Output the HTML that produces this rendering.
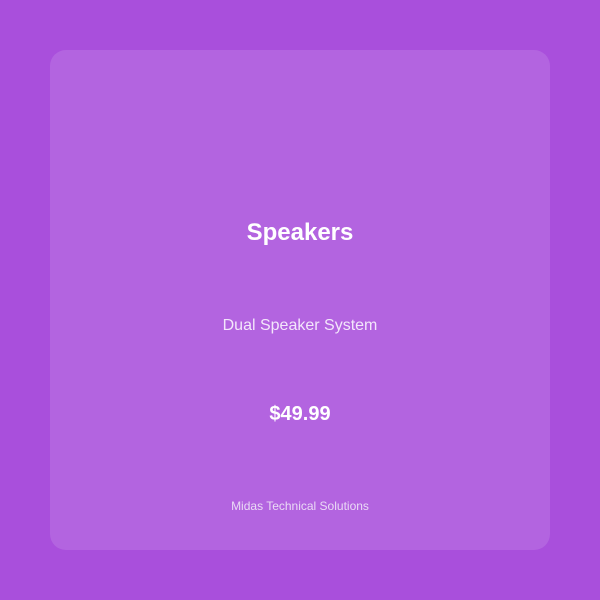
<!DOCTYPE html>
<html><head><style>
html,body{margin:0;padding:0;width:600px;height:600px;background:#a94fdc;font-family:"Liberation Sans",sans-serif;}
.card{position:absolute;left:50px;top:50px;width:500px;height:500px;border-radius:16px;background:rgba(255,255,255,0.12);color:#fff;text-align:center;}
.t{position:absolute;left:0;right:0;top:168px;font-size:24px;font-weight:bold;line-height:30px;}
.d{position:absolute;left:0;right:0;top:266px;font-size:16px;line-height:20px;color:#f3e6fb;}
.p{position:absolute;left:0;right:0;top:352px;font-size:20px;font-weight:bold;line-height:24px;}
.f{position:absolute;left:0;right:0;top:448px;font-size:12px;line-height:16px;color:#eadaf5;}
</style></head><body>
<div class="card">
<div class="t">Speakers</div>
<div class="d">Dual Speaker System</div>
<div class="p">$49.99</div>
<div class="f">Midas Technical Solutions</div>
</div>
</body></html>
